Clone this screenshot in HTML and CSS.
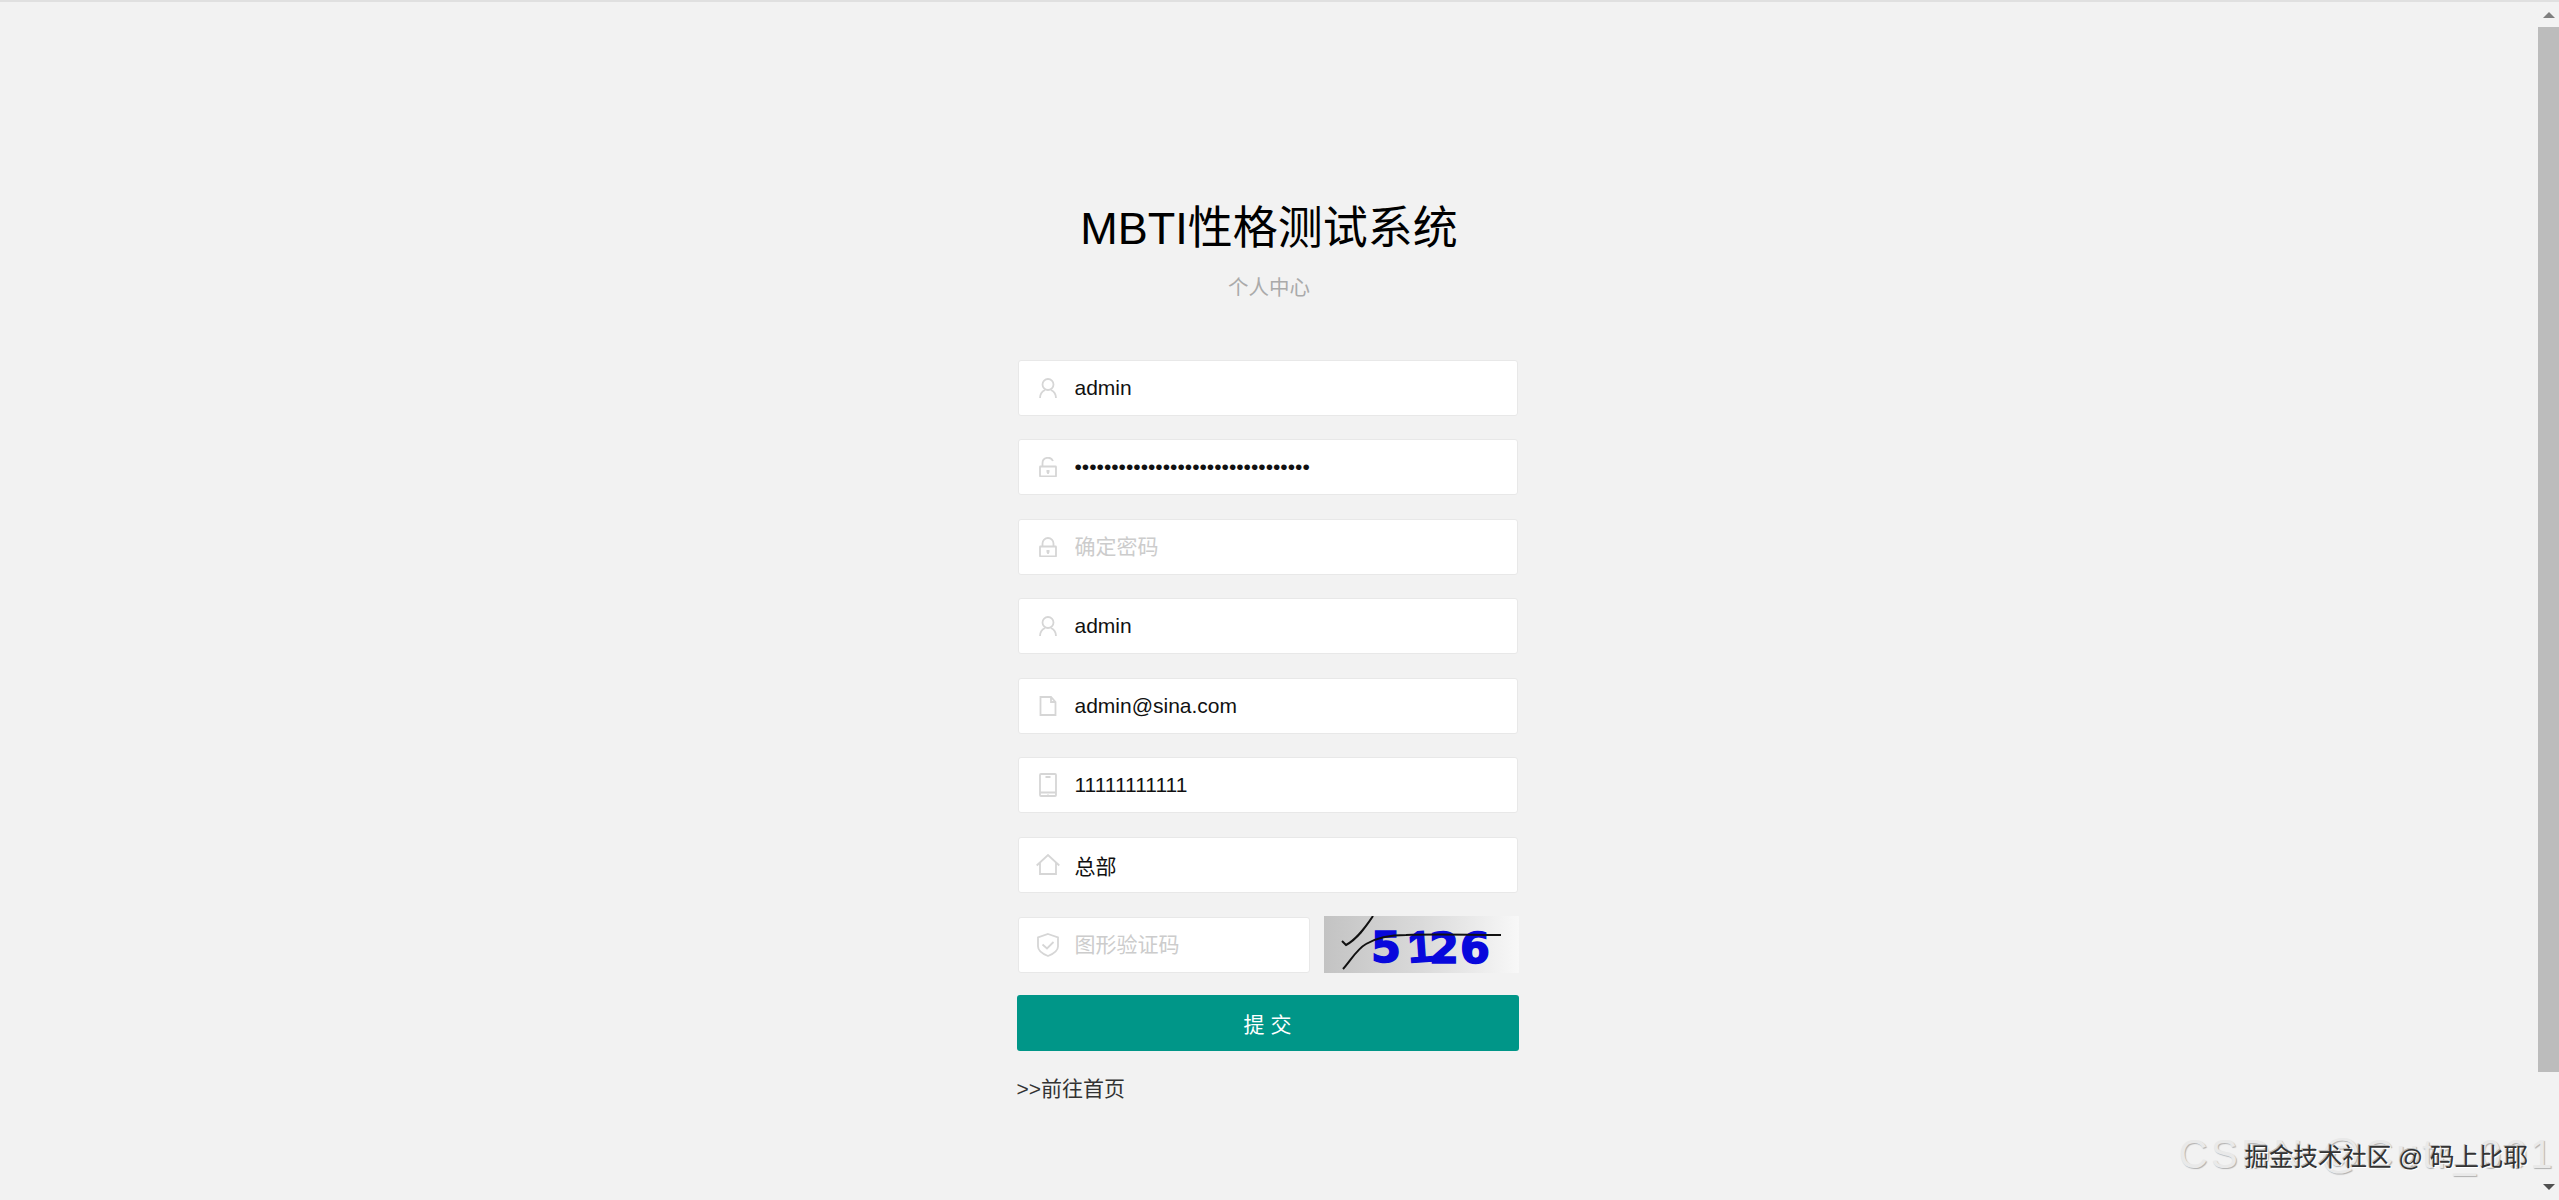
FILE: index.html
```html
<!DOCTYPE html>
<html lang="en">
<head>
    <meta charset="UTF-8">
    <meta name="viewport" content="width=device-width, initial-scale=1.0">
    <title>MBTI性格测试系统</title>
    <link rel="stylesheet" href="styles.css">
</head>
<body>
    <div class="page">
        <main class="content">
            <div class="header">
                <h1>MBTI性格测试系统</h1>
                <p>个人中心</p>
            </div>
            <form class="form">
                <label class="field">
                    <svg class="icon" viewBox="0 0 18 20"><ellipse cx="9" cy="6.500" rx="5.500" ry="5.500"/><path d="M1 20c0-4 2-6.500 5-8M17 20c0-4-2-6.500-5-8"/></svg>
                    <input type="text" value="admin">
                </label>
                <label class="field">
                    <svg class="icon" viewBox="0 0 18 20"><path d="M3.500 9.500V6.500a5.500 5.500 0 0 1 10.500-2.500"/><rect x="1" y="9.500" width="16" height="10" rx="0.500"/><path class="solid" d="M7.500 13h3v2l-.8 2h-1.400l-.8-2z"/></svg>
                    <input type="password" value="21232f297a57a5a743894a0e4a801fc3">
                </label>
                <label class="field">
                    <svg class="icon" viewBox="0 0 18 20"><path d="M3.500 9.500V6.500a5.500 5.500 0 0 1 11 0v3"/><rect x="1" y="9.500" width="16" height="10" rx="0.500"/><path class="solid" d="M7.500 13h3v2l-.8 2h-1.400l-.8-2z"/></svg>
                    <input type="password" placeholder="确定密码">
                </label>
                <label class="field">
                    <svg class="icon" viewBox="0 0 18 20"><ellipse cx="9" cy="6.500" rx="5.500" ry="5.500"/><path d="M1 20c0-4 2-6.500 5-8M17 20c0-4-2-6.500-5-8"/></svg>
                    <input type="text" value="admin">
                </label>
                <label class="field">
                    <svg class="icon" viewBox="0 0 18 20"><path d="M1.500 1H12l4.500 5v13h-15zM12 1v5h4.500"/></svg>
                    <input type="text" value="admin@sina.com">
                </label>
                <label class="field">
                    <svg class="icon icon-tall" viewBox="0 0 18 24"><rect x="1" y="1" width="16" height="22" rx="1"/><path d="M1 19.500h16M6.500 4h5M9 21v.5"/></svg>
                    <input type="text" value="11111111111">
                </label>
                <label class="field">
                    <svg class="icon icon-home" viewBox="0 0 24 21"><path d="M.7 11.500 12 1l11.300 10.500M4 8.500V20h16V8.500"/></svg>
                    <input type="text" value="总部">
                </label>
                <div class="captcha-row">
                    <label class="field">
                        <svg class="icon icon-shield" viewBox="0 0 22 24"><path d="M11 1l10 3.500v9c0 4-5 7.500-10 9.500C6 21 1 17.500 1 13.500v-9z"/><path d="m5.500 11.500 4.500 4 6.500-6.500"/></svg>
                        <input type="text" placeholder="图形验证码">
                    </label>
                    <svg class="captcha" viewBox="0 0 195 57">
                        <defs>
                            <linearGradient id="captcha-bg">
                                <stop offset="0" stop-color="#c3c3c3"/>
                                <stop offset="0.5" stop-color="#dadada"/>
                                <stop offset="1" stop-color="#f8f8f8"/>
                            </linearGradient>
                        </defs>
                        <rect width="195" height="57" fill="url(#captcha-bg)"/>
                        <g class="digits">
                            <text x="47" y="46">5</text>
                            <text class="digit-one" x="85" y="46" transform="rotate(-4 95 46)">1</text>
                            <text x="105" y="47">2</text>
                            <text x="136" y="47">6</text>
                        </g>
                        <path class="scratch" d="M18 25l4 4c11-6 19-17 27-29"/>
                        <path class="scratch" d="M19 53c8-9 14-20 23-25 10-6 26-9 40-9 30-1 65 0 95 0"/>
                    </svg>
                </div>
                <button class="submit" type="button">提 交</button>
                <a class="home-link" href="#">&gt;&gt;前往首页</a>
            </form>
        </main>
        <div class="scrollbar">
            <span class="arrow-up"></span>
            <div class="thumb"></div>
            <span class="arrow-down"></span>
        </div>
    </div>
    <div class="watermark-back">CSDN @Cutr_001</div>
    <div class="watermark-front">掘金技术社区 @ 码上比耶</div>
</body>
</html>
```

FILE: styles.css
```css
* {
    box-sizing: border-box;
}
html, body {
    margin: 0;
    height: 100%;
    overflow: hidden;
}
body {
    background-color: #f2f2f2;
    font-family: "Liberation Sans", "Noto Sans CJK SC", sans-serif;
    color: #111111;
}
.page {
    display: flex;
    height: 1200px;
    border-top: 2px solid #e0e0e0;
}
.content {
    flex: 1;
    display: flex;
    flex-direction: column;
    align-items: center;
}
.header {
    text-align: center;
    padding-top: 199px;
}
.header h1 {
    margin: 0;
    font-size: 45px;
    font-weight: 400;
    line-height: 56px;
    color: #000000;
}
.header p {
    margin: 16px 0 0;
    font-size: 20.500px;
    line-height: 30px;
    color: #aaaaaa;
}
.form {
    width: 502px;
    margin-top: 56.500px;
    margin-right: 3px;
    display: flex;
    flex-direction: column;
    gap: 23.570px;
}
.field {
    display: flex;
    align-items: center;
    height: 56px;
    margin: 0 1px;
    padding-left: 20px;
    background-color: #ffffff;
    border: 1px solid #e8e8e8;
    border-radius: 3px;
}
.icon {
    width: 18px;
    height: 20px;
    flex: none;
    fill: none;
    stroke: #d6d6d6;
    stroke-width: 1.800;
}
.icon-tall {
    height: 24px;
}
.icon-home {
    width: 24px;
    height: 21px;
    margin: 0 -3px;
}
.icon-shield {
    width: 22px;
    height: 24px;
    margin: 0 -2px;
}
.icon .solid {
    fill: #d6d6d6;
    stroke: none;
}
.field input {
    flex: 1;
    min-width: 0;
    height: 100%;
    margin-left: 18px;
    padding: 0;
    border: none;
    outline: none;
    background: transparent;
    font-family: inherit;
    font-size: 21px;
    color: #111111;
}
.field input::placeholder {
    color: #cccccc;
}
.captcha-row {
    display: flex;
    align-items: center;
    justify-content: space-between;
}
.captcha-row .field {
    width: 292px;
    margin-right: 0;
}
.captcha {
    width: 195px;
    height: 57px;
}
.scratch {
    fill: none;
    stroke: #111111;
    stroke-width: 2;
}
.digits {
    font-family: "DejaVu Sans", sans-serif;
    font-size: 43px;
    font-weight: 700;
    fill: #0808dc;
    stroke: #0808dc;
    stroke-width: 1.500;
}
.digits .digit-one {
    font-family: "Liberation Sans", sans-serif;
    font-size: 44px;
}
.submit {
    height: 56px;
    margin-top: -2px;
    border: none;
    border-radius: 3px;
    background-color: #009688;
    color: #ffffff;
    font-family: inherit;
    font-size: 21px;
    cursor: pointer;
}
.home-link {
    margin-top: -1px;
    font-size: 21px;
    line-height: 30px;
    color: #333333;
    text-decoration: none;
}
.scrollbar {
    width: 21px;
    flex: none;
    display: flex;
    flex-direction: column;
    align-items: center;
    height: 1198px;
    padding-top: 10px;
}
.thumb {
    width: 100%;
    height: 1045px;
    margin-top: 9px;
    background-color: #bcbcbc;
}
.arrow-up {
    border: 6px solid transparent;
    border-top: none;
    border-bottom: 6px solid #7f7f7f;
}
.arrow-down {
    margin-top: 112px;
    border: 6px solid transparent;
    border-bottom: none;
    border-top: 6px solid #505050;
}
.watermark-back {
    position: absolute;
    right: 3px;
    top: 1131px;
    font-size: 40px;
    line-height: 46px;
    letter-spacing: 3.400px;
    white-space: nowrap;
    color: #e9e9e9;
    text-shadow: 1px 1px 1px #b0b0b0;
}
.watermark-front {
    position: absolute;
    right: 31px;
    top: 1142px;
    font-size: 24.500px;
    line-height: 32px;
    white-space: nowrap;
    color: #333333;
    text-shadow: 1px 1px 0 #ffffff, -1px -1px 0 #bbbbbb;
}
```
